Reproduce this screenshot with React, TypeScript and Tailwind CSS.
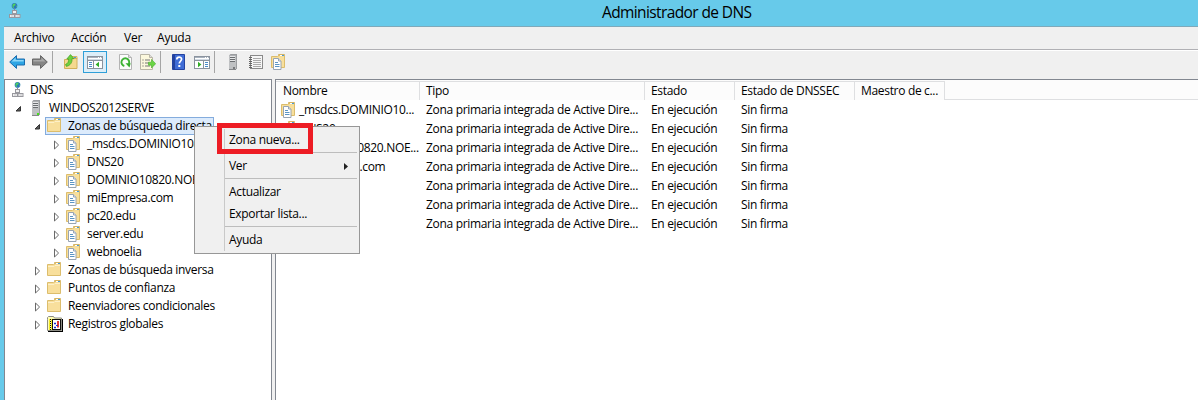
import type { ReactNode } from "react";

function Svg({ children, w = 16, h = 16, className = "" }: { children: ReactNode; w?: number; h?: number; className?: string }) {
  return (
    <svg width={w} height={h} viewBox={`0 0 ${w} ${h}`} className={`block shrink-0 ${className}`}>
      {children}
    </svg>
  );
}

function DnsIcon() {
  return (
    <Svg w={12}>
      <circle cx="5.5" cy="2.9" r="2.8" fill="#2b74c0" />
      <path d="M3.6 1.2 6.3.3 6.6 2.3 4.6 3.2 5.3 5.2 3.4 4.2ZM7 3 8.3 2.4 7.5 4.6Z" fill="#4fcf5f" />
      <path d="M5.5 5.7V8" stroke="#8a8a8e" />
      <rect x="3.5" y="7.5" width="4" height="3" fill="#f0f0f0" stroke="#98989e" />
      <rect x=".5" y="11.5" width="5" height="3" fill="#f0f0f0" stroke="#98989e" />
      <rect x="6" y="11.5" width="5" height="3" fill="#f0f0f0" stroke="#98989e" />
      <path d="M2 13h2.5M7.5 13H10" stroke="#c4c4c8" />
    </Svg>
  );
}

function ServerIcon({ light = true }: { light?: boolean }) {
  return (
    <Svg>
      <path d="M4 1.5 5.5 0H12v14.3L10.5 16H4Z" fill="#9b9da0" />
      <rect x="4" y="1.5" width="7" height="14" fill="#bfc1c3" />
      <path d="M5 3.5h5M5 5.5h5M5 7.5h5" stroke="#6b6e71" />
      <path d="M5 2.5h5M5 4.5h5M5 6.5h5" stroke="#e5e6e7" />
      <rect x={light ? 9 : 8} y="13" width="2" height="2" fill={light ? "#45e01d" : "#77797b"} />
      <path d="M4 15.5h7" stroke="#85878a" />
      {light && <rect x="9" y="13" width="2" height="2" fill="#45e01d" />}
    </Svg>
  );
}

function FolderIcon() {
  return (
    <Svg>
      <path d="M7.5 3V.5h6V3" fill="#f7e3ab" stroke="#d6b565" />
      <path d="M.5 2.5h6l1.5-.9h5.5v11.9H.5Z" fill="#f8df9c" stroke="#dcbd6c" />
      <path d="M1 4.5h6l1-1h5" fill="none" stroke="#fdf0c8" />
      <path d="M9 1.5h2" stroke="#fff" />
      <path d="M11 1.5h2" stroke="#469bd8" />
    </Svg>
  );
}

function ZoneIcon() {
  return (
    <Svg>
      <path d="M7.5 3V.5h6V3" fill="#f7e3ab" stroke="#d6b565" />
      <path d="M.5 2.5h6l1.5-.9h5.5v11.9H.5Z" fill="#f8df9c" stroke="#dcbd6c" />
      <path d="M9 1.5h2" stroke="#fff" />
      <path d="M11 1.5h2" stroke="#469bd8" />
      <path d="M2.5 4.5h5l2.5 2.5v8.5H2.5Z" fill="#fff" stroke="#98a4b2" />
      <path d="M7.5 4.5V7H10" fill="#e3edf7" stroke="#98a4b2" />
      <path d="M4 8.5h3M4 10.5h4.5M4 12.5h4.5" stroke="#5b94c4" />
    </Svg>
  );
}

function LogIcon() {
  return (
    <Svg>
      <path d="M.5 3.5v-2l1-1h5l1 1.5h7v12.5H.5Z" fill="#fffcb4" stroke="#8c8c84" />
      <path d="M1 15.5h15M15.5 3v13" stroke="#000" />
      <path d="M2.5 3v11M4.5 3v11" stroke="#f2e820" />
      <path d="M3.5 3v11" stroke="#111" strokeDasharray="1 1" />
      <rect x="5.5" y="3.5" width="8" height="10" fill="#fff" stroke="#111" />
      <path d="M7 7.5h2M7 11.5h2" stroke="#1b2fd0" strokeWidth="1.6" />
      <path d="M11 5v6.5" stroke="#e02020" strokeWidth="1.8" />
      <path d="M9 9.5h2" stroke="#1b2fd0" />
    </Svg>
  );
}

function BackIcon() {
  return (
    <Svg>
      <path d="M.7 8 7.5 1.6V5h8v6h-8v3.4Z" fill="#2ea5e4" stroke="#1b6cae" />
      <path d="M2.6 7.5 6.6 3.7V6h8v1.5Z" fill="#8ed7f8" />
    </Svg>
  );
}

function ForwardIcon() {
  return (
    <Svg>
      <path d="M15.3 8 8.5 1.6V5h-8v6h8v3.4Z" fill="#858585" stroke="#666" />
      <path d="M13.4 7.5 9.4 3.7V6h-8v1.5Z" fill="#aaa" />
    </Svg>
  );
}

function UpIcon() {
  return (
    <Svg>
      <path d="M8.5 5V2.5h5.5V5" fill="#f7e3ab" stroke="#d6b565" />
      <path d="M1.5 5.5h6l1-1H14v10H1.5Z" fill="#f5d98f" stroke="#d2b05a" />
      <path d="M11 3.5h2" stroke="#469bd8" />
      <path d="M2.5 10.5C5 9.5 5.8 7.5 5.6 5H3.8L7.5.6 11 4.6H9c.4 4-1.8 7-5.6 7.8Z" fill="#6fd13f" stroke="#3f9f22" strokeWidth=".7" />
    </Svg>
  );
}

function ConsoleIcon({ flipped = false }: { flipped?: boolean }) {
  return (
    <Svg>
      <rect x=".5" y="2.5" width="15" height="12" fill="#fff" stroke="#8b939e" />
      <path d="M1 3.5h14" stroke="#a9b2be" />
      <path d="M11 3.5h1M13 3.5h1" stroke="#fff" />
      <path d="M1 5.5h14" stroke="#d3dbe4" />
      <path d="M1 6.5h14" stroke="#8b939e" />
      {flipped ? (
        <>
          <path d="M9.5 7v7" stroke="#8b939e" />
          <path d="M11 8.5h3M11 10.5h3M11 12.5h3" stroke="#4c8bc8" />
          <path d="M4 7.8v5.4L7.4 10.5Z" fill="#31ad24" />
        </>
      ) : (
        <>
          <path d="M6.5 7v7" stroke="#8b939e" />
          <path d="M2 8.5h3M2 10.5h3M2 12.5h3" stroke="#4c8bc8" />
          <path d="M12 7.8v5.4L8.6 10.5Z" fill="#31ad24" />
        </>
      )}
    </Svg>
  );
}

function RefreshIcon() {
  return (
    <Svg>
      <path d="M1.5.5h9l3 3v12h-12Z" fill="#fcfcfc" stroke="#b4b4b4" />
      <path d="M10.5.5v3h3" fill="#ddd" stroke="#b4b4b4" />
      <path d="M6.3 12A3.9 3.9 0 1 1 10.8 10" fill="none" stroke="#3fb336" strokeWidth="1.9" />
      <path d="M7.5 9.2h5.2l-1.2 4.3Z" fill="#36ad2d" />
    </Svg>
  );
}

function ExportIcon() {
  return (
    <Svg>
      <path d="M.5.5h9l3 3v12H.5Z" fill="#fcf8dd" stroke="#b9b5a6" />
      <path d="M9.5.5v3h3" fill="#ddd" stroke="#b9b5a6" />
      <path d="M2.5 6h1M2.5 9h1M2.5 12h1" stroke="#555" />
      <path d="M5 6h5M5 9h4M5 12h5" stroke="#777" />
      <path d="M8.5 8.2h3V5.4l4.2 4.3-4.2 4.3v-2.8h-3Z" fill="#6bd545" stroke="#45ab28" strokeWidth=".6" />
    </Svg>
  );
}

function HelpIcon() {
  return (
    <Svg>
      <path d="M2.5.5h12v15h-12Z" fill="#3f6cd6" stroke="#2443a0" />
      <path d="M3 1h2v14H3Z" fill="#24429e" />
      <path d="M6.8 5.4c0-3.2 4.8-3 4.8-.3 0 2-2.3 2.3-2.3 4.4" fill="none" stroke="#fff" strokeWidth="1.7" />
      <rect x="8.3" y="11" width="2" height="2" fill="#fff" />
    </Svg>
  );
}

function NotebookIcon() {
  return (
    <Svg>
      <rect x="2.5" y="1.5" width="12" height="13" fill="#f6f6f6" stroke="#8a8a8a" />
      <path d="M5 4.5h8M5 6.5h8M5 8.5h8M5 10.5h8M5 12.5h8" stroke="#aaa" />
      <path d="M1 3.5h3M1 5.5h3M1 7.5h3M1 9.5h3M1 11.5h3M1 13.5h3" stroke="#666" />
    </Svg>
  );
}

function Expander({ state }: { state?: "open" | "closed" }) {
  return (
    <span className="flex w-[13px] shrink-0 items-center">
      {state === "open" && (
        <Svg w={7} h={18}>
          <path d="M5.5 7.5v4.5H1Z" fill="#595959" stroke="#333" />
        </Svg>
      )}
      {state === "closed" && (
        <Svg w={7} h={18}>
          <path d="M1.5 6v8L5.6 10Z" fill="#fff" stroke="#6a6a6a" />
        </Svg>
      )}
    </span>
  );
}

const levels = ["pl-[10px]", "pl-[29px]", "pl-[48px]"];

function TreeRow({ level, state, icon, label, selected = false }: { level: number; state: "open" | "closed"; icon: ReactNode; label: string; selected?: boolean }) {
  return (
    <div className={`flex h-[18px] items-center ${levels[level]}`}>
      <Expander state={state} />
      {selected ? (
        <span className="-ml-[2px] flex h-[18px] w-[169px] items-center border border-[#84acdd] bg-[#dcebfc] pl-[1px]">
          {icon}
          <span className="ml-[5px]">{label}</span>
        </span>
      ) : (
        <>
          {icon}
          <span className="ml-[5px]">{label}</span>
        </>
      )}
    </div>
  );
}

const zones = ["_msdcs.DOMINIO108", "DNS20", "DOMINIO10820.NOEL", "miEmpresa.com", "pc20.edu", "server.edu", "webnoelia"];
const listNames = ["_msdcs.DOMINIO10...", "DNS20", "DOMINIO10820.NOE...", "miEmpresa.com", "pc20.edu", "server.edu", "webnoelia"];

const grid = "grid grid-cols-[144px_225px_90px_120px_90px]";

function HeaderCell({ children }: { children: ReactNode }) {
  return <div className="mt-px flex h-[19px] items-center border-t border-r border-[#dedfe1] bg-[#fcfcfc] pl-[6px]">{children}</div>;
}

function Separator() {
  return <div className="ml-[30px] mr-[2px] mt-px mb-[2px] h-px bg-[#bdbdbd]" />;
}

function MenuItem({ children, submenu = false }: { children: ReactNode; submenu?: boolean }) {
  return (
    <div className="flex h-[22px] items-center justify-between pl-[34px] pr-[11px]">
      <span>{children}</span>
      {submenu && (
        <Svg w={4} h={7}>
          <path d="M0 0 4 3.5 0 7Z" fill="#222" />
        </Svg>
      )}
    </div>
  );
}

function ToolSeparator({ className }: { className: string }) {
  return <div className={`h-[22px] w-px shrink-0 bg-[#a5a5a5] ${className}`} />;
}

export default function App() {
  return (
    <div className="relative flex h-[400px] w-[1198px] flex-col overflow-hidden whitespace-nowrap bg-[#67caea] font-['Open_Sans','Noto_Sans',sans-serif] text-[12px] leading-[18px] tracking-[-0.32px] text-black">
      <header className="flex h-[26px] shrink-0 items-start pt-[3px]">
        <div className="w-[602px] pl-[9px]">
          <DnsIcon />
        </div>
        <h1 className="text-[15.5px] leading-[18px] tracking-[-0.61px]">Administrador de DNS</h1>
      </header>
      <div className="ml-[4px] flex min-h-0 flex-1 flex-col border-t border-[#7fa9ba] bg-[#f0f0f0]">
        <nav className="flex h-[23px] shrink-0 items-center border-b border-[#b0b0b4] pl-[10px] tracking-[-0.2px]">
          <span className="w-[57px]">Archivo</span>
          <span className="w-[53px]">Acción</span>
          <span className="w-[33px]">Ver</span>
          <span>Ayuda</span>
        </nav>
        <div className="flex h-[29px] shrink-0 items-start border-t border-white pl-[5px]">
          <span className="mt-[3px]"><BackIcon /></span>
          <span className="ml-[7px] mt-[3px]"><ForwardIcon /></span>
          <ToolSeparator className="ml-[4px]" />
          <span className="ml-[10px] mt-[3px]"><UpIcon /></span>
          <span className="ml-[4px] flex h-[22px] w-[24px] items-center justify-center border border-[#2f9fd8] bg-[#dceef9]"><ConsoleIcon /></span>
          <span className="ml-[11px] mt-[3px]"><RefreshIcon /></span>
          <span className="ml-[6px] mt-[3px]"><ExportIcon /></span>
          <ToolSeparator className="ml-[4px]" />
          <span className="ml-[9px] mt-[3px]"><HelpIcon /></span>
          <span className="ml-[8px] mt-[3px]"><ConsoleIcon flipped /></span>
          <ToolSeparator className="ml-[4px]" />
          <span className="ml-[10px] mt-[3px]"><ServerIcon light={false} /></span>
          <span className="ml-[7px] mt-[3px]"><NotebookIcon /></span>
          <span className="ml-[7px] mt-[3px]"><ZoneIcon /></span>
        </div>
        <main className="flex min-h-0 flex-1">
          <section className="w-[268px] shrink-0 border border-b-0 border-[#828790] bg-white pt-px">
            <div className="flex h-[18px] items-center pl-[7px]">
              <DnsIcon />
              <span className="ml-[6px]">DNS</span>
            </div>
            <TreeRow level={0} state="open" icon={<ServerIcon />} label="WINDOS2012SERVE" />
            <TreeRow level={1} state="open" icon={<FolderIcon />} label="Zonas de búsqueda directa" selected />
            {zones.map((z) => (
              <TreeRow key={z} level={2} state="closed" icon={<ZoneIcon />} label={z} />
            ))}
            <TreeRow level={1} state="closed" icon={<FolderIcon />} label="Zonas de búsqueda inversa" />
            <TreeRow level={1} state="closed" icon={<FolderIcon />} label="Puntos de confianza" />
            <TreeRow level={1} state="closed" icon={<FolderIcon />} label="Reenviadores condicionales" />
            <TreeRow level={1} state="closed" icon={<LogIcon />} label="Registros globales" />
          </section>
          <section className="ml-[3px] min-w-0 flex-1 border-l border-t border-[#828790] bg-white">
            <div className={`${grid} h-[20px] border-b border-[#dedfe1] bg-[#fcfcfc]`}>
              <HeaderCell><span className="pl-px">Nombre</span></HeaderCell>
              <HeaderCell>Tipo</HeaderCell>
              <HeaderCell>Estado</HeaderCell>
              <HeaderCell>Estado de DNSSEC</HeaderCell>
              <HeaderCell>Maestro de c...</HeaderCell>
            </div>
            {listNames.map((n) => (
              <div key={n} className={`${grid} h-[19px] items-center`}>
                <div className="flex items-center pl-[5px]">
                  <ZoneIcon />
                  <span className="ml-[2px]">{n}</span>
                </div>
                <span className="pl-[6px]">Zona primaria integrada de Active Dire...</span>
                <span className="pl-[6px]">En ejecución</span>
                <span className="pl-[6px]">Sin firma</span>
              </div>
            ))}
          </section>
        </main>
      </div>
      <div className="absolute left-[194px] top-[126px] h-[128px] w-[166px] border border-[#979797] bg-[#f0f0f0] pt-[2px]">
        <div className="absolute left-[29px] top-[2px] h-[122px] w-px bg-[#c9c9c9]" />
        <MenuItem>Zona nueva...</MenuItem>
        <Separator />
        <MenuItem submenu>Ver</MenuItem>
        <Separator />
        <MenuItem>Actualizar</MenuItem>
        <MenuItem>Exportar lista...</MenuItem>
        <Separator />
        <MenuItem>Ayuda</MenuItem>
      </div>
      <div className="absolute left-[217px] top-[123px] h-[31px] w-[96px] border-[5px] border-[#ed1c24]" />
    </div>
  );
}
